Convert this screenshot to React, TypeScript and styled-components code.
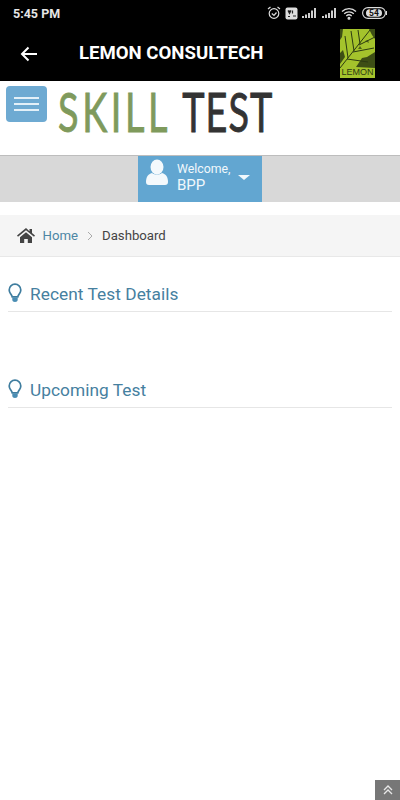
import React from "react";
import styled, { createGlobalStyle } from "styled-components";

const Global = createGlobalStyle`
  html, body { margin: 0; padding: 0; background: #fff; font-family: Roboto, "Liberation Sans", sans-serif; }
  * { box-sizing: border-box; }
`;
const Page = styled.div`
  position: relative;
  width: 400px;
  height: 800px;
  overflow: hidden;
  background: #fff;
`;
const AppHeader = styled.header`
  height: 81px;
  background: #000;
  color: #fff;
`;
const StatusBar = styled.div`
  height: 26px;
  display: flex;
  align-items: center;
  justify-content: space-between;
  padding: 0 13px;
`;
const Time = styled.span`
  font-size: 12.5px;
  font-weight: 700;
  color: #e6e6e6;
`;
const StatusIcons = styled.div`
  display: flex;
  align-items: center;
  gap: 4.2px;
`;
const ToolBar = styled.div`
  height: 55px;
  display: flex;
  align-items: center;
  padding: 0 25px 0 20px;
`;
const Title = styled.h1`
  flex: 1;
  margin: 0 0 1px 41px;
  font-size: 18.6px;
  line-height: 24px;
  font-weight: 700;
  color: #fff;
`;
const LemonLogo = styled.div`
  position: relative;
  width: 35px;
  height: 49px;
  background: #a4c32c;
  overflow: hidden;
`;
const LemonText = styled.span`
  position: absolute;
  left: 0;
  right: 0;
  bottom: 1px;
  text-align: center;
  font-family: "Liberation Sans", sans-serif;
  font-size: 9px;
  line-height: 10px;
  color: #2c3a12;
`;
const BrandBar = styled.div`
  height: 74px;
  display: flex;
  align-items: flex-start;
  padding: 5px 0 0 6px;
  background: #fff;
`;
const MenuButton = styled.button`
  width: 41px;
  height: 36px;
  padding: 0;
  border: none;
  border-radius: 4px;
  background: #6eaad2;
  display: flex;
  flex-direction: column;
  align-items: center;
  justify-content: center;
  gap: 4px;
`;
const MenuLine = styled.span`
  width: 25px;
  height: 2px;
  background: #e3f0f8;
`;
const Brand = styled.div`
  width: 214px;
  margin: 3px 0 0 11px;
  height: 45px;
  white-space: nowrap;
`;
const BrandWords = styled.div`
  display: inline-block;
  transform: scaleX(0.7);
  transform-origin: left top;
  font-family: Lato, "Liberation Sans", sans-serif;
  font-size: 54px;
  line-height: 46px;
  -webkit-text-stroke: 0.9px currentColor;
`;
const BrandWord = styled.span<{ $color: string; $track: number; $gap?: number }>`
  color: ${(p) => p.$color};
  letter-spacing: ${(p) => p.$track}px;
  margin-left: ${(p) => p.$gap ?? 0}px;
`;
const WelcomeBar = styled.div`
  height: 47px;
  background: #d8d8d8;
  border-top: 1px solid #bdbdbd;
  display: flex;
  justify-content: center;
`;
const WelcomeMenu = styled.div`
  width: 124px;
  background: #62a6d1;
  color: #f1f8fc;
  display: flex;
  align-items: center;
  padding: 0 0 6px 7px;
`;
const UserIcon = styled.svg`
  margin-top: -6px;
`;
const WelcomeText = styled.div`
  margin: 2px 0 0 8px;
  width: 61px;
  font-size: 12.3px;
  line-height: 15px;
`;
const WelcomeName = styled.div`
  font-size: 15px;
  line-height: 16px;
`;
const Caret = styled.span`
  margin-top: 2px;
  width: 0;
  height: 0;
  border-left: 6px solid transparent;
  border-right: 6px solid transparent;
  border-top: 5px solid #f1f8fc;
`;
const Breadcrumb = styled.nav`
  height: 42px;
  margin-top: 13px;
  background: #f5f5f5;
  border-bottom: 1px solid #e8e8e8;
  display: flex;
  align-items: center;
  padding-left: 17px;
  font-size: 13.2px;
`;
const Crumb = styled.span`
  margin-left: 7.5px;
  color: #4d86a4;
`;
const Sep = styled.span`
  margin: 0 9px;
  display: flex;
`;
const CrumbCurrent = styled.span`
  color: #444;
`;
const Section = styled.section`
  margin: 0 8px;
`;
const SectionHead = styled.div<{ $top: number }>`
  margin-top: ${(p) => p.$top}px;
  height: 30px;
  display: flex;
  align-items: center;
  border-bottom: 1px solid #e6e6e6;
  padding-bottom: 5px;
  color: #46809f;
  font-size: 17.3px;
  letter-spacing: 0.05px;
`;
const SectionTitle = styled.span`
  margin-left: 8px;
`;
const BulbIcon = styled.svg`
  margin-top: -2px;
`;
const ToTop = styled.div`
  position: absolute;
  right: 0;
  bottom: 0;
  width: 25px;
  height: 20px;
  background: #777;
  display: flex;
  align-items: center;
  justify-content: center;
`;

const Bulb = () => (
  <BulbIcon width="14" height="20" viewBox="0 0 14 20">
    <path d="M7 1.2a5.8 5.8 0 0 0-5.8 5.8c0 1.700.7 2.800 1.500 3.900.7 1 1.300 1.800 1.500 3h5.600c.2-1.200.8-2 1.500-3 .8-1.100 1.500-2.200 1.500-3.900A5.800 5.800 0 0 0 7 1.200z" fill="none" stroke="#3f7d9f" strokeWidth="1.700" />
    <path d="M4.300 14.500h5.400v2.300c0 1.300-1.200 2.300-2.700 2.300s-2.700-1-2.700-2.300z" fill="#4a8db3" />
  </BulbIcon>
);

const Bars = () => (
  <svg width="15" height="10" viewBox="0 0 15 10" fill="#cfcfcf">
    <rect x="0" y="8" width="2" height="2" /><rect x="3" y="6.500" width="2" height="3.500" /><rect x="6" y="5" width="2" height="5" /><rect x="9" y="2.500" width="2" height="7.500" /><rect x="12" y="0" width="2" height="10" />
  </svg>
);

export default function App() {
  return (
    <Page>
      <Global />
      <AppHeader>
        <StatusBar>
          <Time>5:45 PM</Time>
          <StatusIcons>
            <svg width="14" height="14" viewBox="0 0 14 14" fill="none" stroke="#ddd" strokeWidth="1.200">
              <circle cx="7" cy="7.500" r="4.800" /><path d="M4.800 7.500 7 9.500l2.500-3M1 3l2.500-2M13 3l-2.500-2" />
            </svg>
            <svg width="13" height="13" viewBox="0 0 13 13"><rect x="0.500" y="0.500" width="12" height="12" rx="2" fill="#ddd" /><path d="M3 3.500l1.500 3 1.500-3M7.500 3.500v3M3 9.500h2M8 9h3" stroke="#222" strokeWidth="1.200" /></svg>
            <Bars />
            <Bars />
            <svg width="17" height="13" viewBox="0 0 17 13" fill="none" stroke="#ddd" strokeWidth="1.300">
              <path d="M1 4.500a10 10 0 0 1 14 0M3.200 6.800a7 7 0 0 1 9.600 0M5.300 9a4 4 0 0 1 5.400 0" /><circle cx="8" cy="11.300" r="0.900" fill="#ddd" />
            </svg>
            <svg width="25" height="12" viewBox="0 0 25 12">
              <rect x="0.600" y="0.600" width="22.800" height="10.800" rx="5.400" fill="none" stroke="#ddd" strokeWidth="1.100" />
              <rect x="4" y="2.200" width="16" height="7.600" rx="3.800" fill="#ddd" />
              <rect x="23.800" y="4" width="1.200" height="4" fill="#ddd" />
              <text x="12" y="8.900" fontSize="8.500" fontWeight="700" fontFamily="Roboto, sans-serif" textAnchor="middle" fill="#111">54</text>
            </svg>
          </StatusIcons>
        </StatusBar>
        <ToolBar>
          <svg width="18" height="16" viewBox="0 0 18 16" fill="none" stroke="#fff" strokeWidth="2">
            <path d="M17 8H2M8.500 1.500 2 8l6.500 6.500" />
          </svg>
          <Title>LEMON CONSULTECH</Title>
          <LemonLogo>
            <svg width="35" height="39" viewBox="0 0 35 39" style={{ display: "block" }}>
              <rect width="35" height="39" fill="#a4c32c" />
              <path d="M29 0h6v10l-3-4zM0 0h3L2 8 0 11zM0 24l3-3 2 7-5 7zM16 38l6-9 5-1 8-5v16z" fill="#2c3a12" opacity="0.850" />
              <path d="M18 20l2-3 2 3zM25 12l3-1 1 3z" fill="#2c3a12" opacity="0.700" />
              <path d="M0 39 30 1M8 29 5 7M14 22 11 2M20 15 18 1M13 23 34 19M19 16 35 8M7 30 28 33" stroke="#2c3a12" strokeWidth="1" fill="none" />
            </svg>
            <LemonText>LEMON</LemonText>
          </LemonLogo>
        </ToolBar>
      </AppHeader>
      <BrandBar>
        <MenuButton aria-label="Menu">
          <MenuLine /><MenuLine /><MenuLine />
        </MenuButton>
        <Brand>
          <BrandWords>
            <BrandWord $color="#7f9a5c" $track={5.2}>SKILL</BrandWord>{" "}
            <BrandWord $color="#333333" $track={1.5} $gap={2}>TEST</BrandWord>
          </BrandWords>
        </Brand>
      </BrandBar>
      <WelcomeBar>
        <WelcomeMenu>
          <UserIcon width="24" height="28" viewBox="0 0 24 28" fill="#f4f9fc">
            <ellipse cx="12" cy="8" rx="6.500" ry="7.500" />
            <path d="M1 23c0-5 2-8 6-9 3 2 7 2 10 0 4 1 6 4 6 9 0 2-1 3-3 3H4c-2 0-3-1-3-3z" />
          </UserIcon>
          <WelcomeText>
            Welcome,
            <WelcomeName>BPP</WelcomeName>
          </WelcomeText>
          <Caret />
        </WelcomeMenu>
      </WelcomeBar>
      <Breadcrumb>
        <svg width="18" height="15" viewBox="0 0 18 15" fill="#444">
          <path d="M9 0 0 7.500l1 1.200L9 2.200l8 6.500 1-1.200-3-2.500V1h-2.500v2.200z" />
          <path d="M3 9.200 9 4.200l6 5V15h-4.200v-4H7.200v4H3z" />
        </svg>
        <Crumb>Home</Crumb>
        <Sep>
          <svg width="6" height="10" viewBox="0 0 6 10" fill="none" stroke="#aaa" strokeWidth="1">
            <path d="M1 1l4 4-4 4" />
          </svg>
        </Sep>
        <CrumbCurrent>Dashboard</CrumbCurrent>
      </Breadcrumb>
      <Section>
        <SectionHead $top={25}>
          <Bulb />
          <SectionTitle>Recent Test Details</SectionTitle>
        </SectionHead>
        <SectionHead $top={66}>
          <Bulb />
          <SectionTitle>Upcoming Test</SectionTitle>
        </SectionHead>
      </Section>
      <ToTop>
        <svg width="10" height="10" viewBox="0 0 10 10" fill="none" stroke="#e8e8e8" strokeWidth="1.300">
          <path d="M1 5l4-4 4 4M1 9l4-4 4 4" />
        </svg>
      </ToTop>
    </Page>
  );
}
